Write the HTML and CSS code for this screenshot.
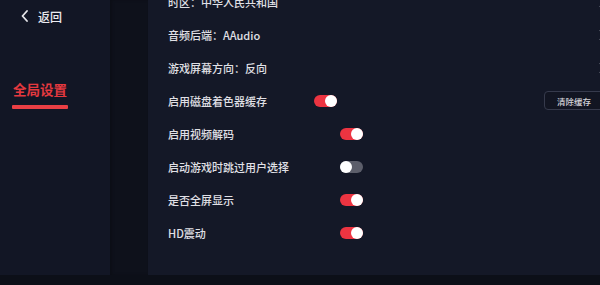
FILE: index.html
```html
<!DOCTYPE html>
<html lang="zh-CN">
<head>
<meta charset="utf-8">
<link rel="stylesheet" href="styles.css">
</head>
<body>
<div class="app">
  <aside class="sidebar">
    <div class="back">
      <svg class="back-icon" width="10" height="12" viewBox="0 0 10 12"><path d="M7 1 L2.5 6 L7 11" fill="none" stroke="#e6e6ea" stroke-width="1.8" stroke-linecap="round" stroke-linejoin="round"/></svg>
      <span>返回</span>
    </div>
    <div class="nav-item">
      <span class="nav-label">全局设置</span>
      <span class="nav-bar"></span>
    </div>
  </aside>
  <div class="gutter"></div>
  <main class="main">
    <ul class="list">
      <li class="row"><span class="label">时区：中华人民共和国</span><svg class="chev" width="8" height="12" viewBox="0 0 8 12"><path d="M2 1 L6 6 L2 11" fill="none" stroke="#9a9cab" stroke-width="1.6"/></svg></li>
      <li class="row"><span class="label">音频后端：AAudio</span><svg class="chev" width="8" height="12" viewBox="0 0 8 12"><path d="M2 1 L6 6 L2 11" fill="none" stroke="#9a9cab" stroke-width="1.6"/></svg></li>
      <li class="row"><span class="label">游戏屏幕方向：反向</span><svg class="chev" width="8" height="12" viewBox="0 0 8 12"><path d="M2 1 L6 6 L2 11" fill="none" stroke="#9a9cab" stroke-width="1.6"/></svg></li>
      <li class="row"><span class="label label-short">启用磁盘着色器缓存</span><span class="toggle on"></span><span class="spacer"></span><span class="btn">清除缓存</span></li>
      <li class="row"><span class="label label-long">启用视频解码</span><span class="toggle on"></span></li>
      <li class="row"><span class="label label-long">启动游戏时跳过用户选择</span><span class="toggle"></span></li>
      <li class="row"><span class="label label-long">是否全屏显示</span><span class="toggle on"></span></li>
      <li class="row"><span class="label label-long">HD震动</span><span class="toggle on"></span></li>
    </ul>
  </main>
</div>
</body>
</html>
```
FILE: styles.css
```css
html, body {
  margin: 0;
  padding: 0;
}
body {
  width: 600px;
  height: 285px;
  overflow: hidden;
  background: #0c0f18;
  font-family: "Noto Sans CJK SC", "Noto Sans", sans-serif;
  color: #e0e0e6;
}
.app {
  display: flex;
  height: 275px;
  overflow: hidden;
}
.sidebar {
  width: 110px;
  flex: none;
  background: #121625;
  display: flex;
  flex-direction: column;
}
.back {
  display: flex;
  align-items: center;
  gap: 8px;
  padding: 9px 0 0 20px;
  height: 14px;
  font-size: 12px;
  font-weight: 500;
  color: #ececf0;
}
.back-icon {
  flex: none;
}
.nav-item {
  margin-top: 58px;
  padding-left: 12px;
  display: flex;
  flex-direction: column;
  align-items: flex-start;
}
.nav-label {
  font-size: 13.5px;
  font-weight: 700;
  color: #e5393f;
  line-height: 16px;
  padding-left: 1px;
}
.nav-bar {
  display: block;
  width: 56px;
  height: 4px;
  margin-top: 8px;
  background: #ea3f44;
  border-radius: 1px;
}
.gutter {
  width: 38px;
  flex: none;
  background: #0e111b;
  box-shadow: inset 2px 0 3px rgba(0,0,0,0.2);
}
.main {
  flex: 1;
  background: #141827;
  overflow: hidden;
}
.list {
  list-style: none;
  margin: -15px 0 0 0;
  padding: 0 0 0 20px;
}
.row {
  height: 33px;
  display: flex;
  align-items: center;
  font-size: 11px;
  font-weight: 500;
  white-space: nowrap;
}
.label {
  flex: none;
}
.label-short {
  width: 146px;
}
.label-long {
  width: 172px;
}
.row .chev {
  margin-left: auto;
  margin-right: -6px;
  flex: none;
}
.spacer {
  flex: 1;
}
.toggle {
  position: relative;
  flex: none;
  width: 23px;
  height: 12px;
  border-radius: 6px;
  background: #5c5e6a;
}
.toggle::after {
  content: "";
  position: absolute;
  top: 0;
  left: 0;
  width: 12px;
  height: 12px;
  border-radius: 50%;
  background: #ffffff;
}
.toggle.on {
  background: #ec3441;
}
.toggle.on::after {
  left: 11px;
}
.btn {
  flex: none;
  width: 62px;
  height: 17px;
  margin-right: -20px;
  border: 1px solid #363a4c;
  border-radius: 4px;
  background: #121522;
  font-size: 8.5px;
  color: #d6d6dc;
  display: flex;
  align-items: center;
  padding-left: 12px;
  box-sizing: content-box;
}
```
